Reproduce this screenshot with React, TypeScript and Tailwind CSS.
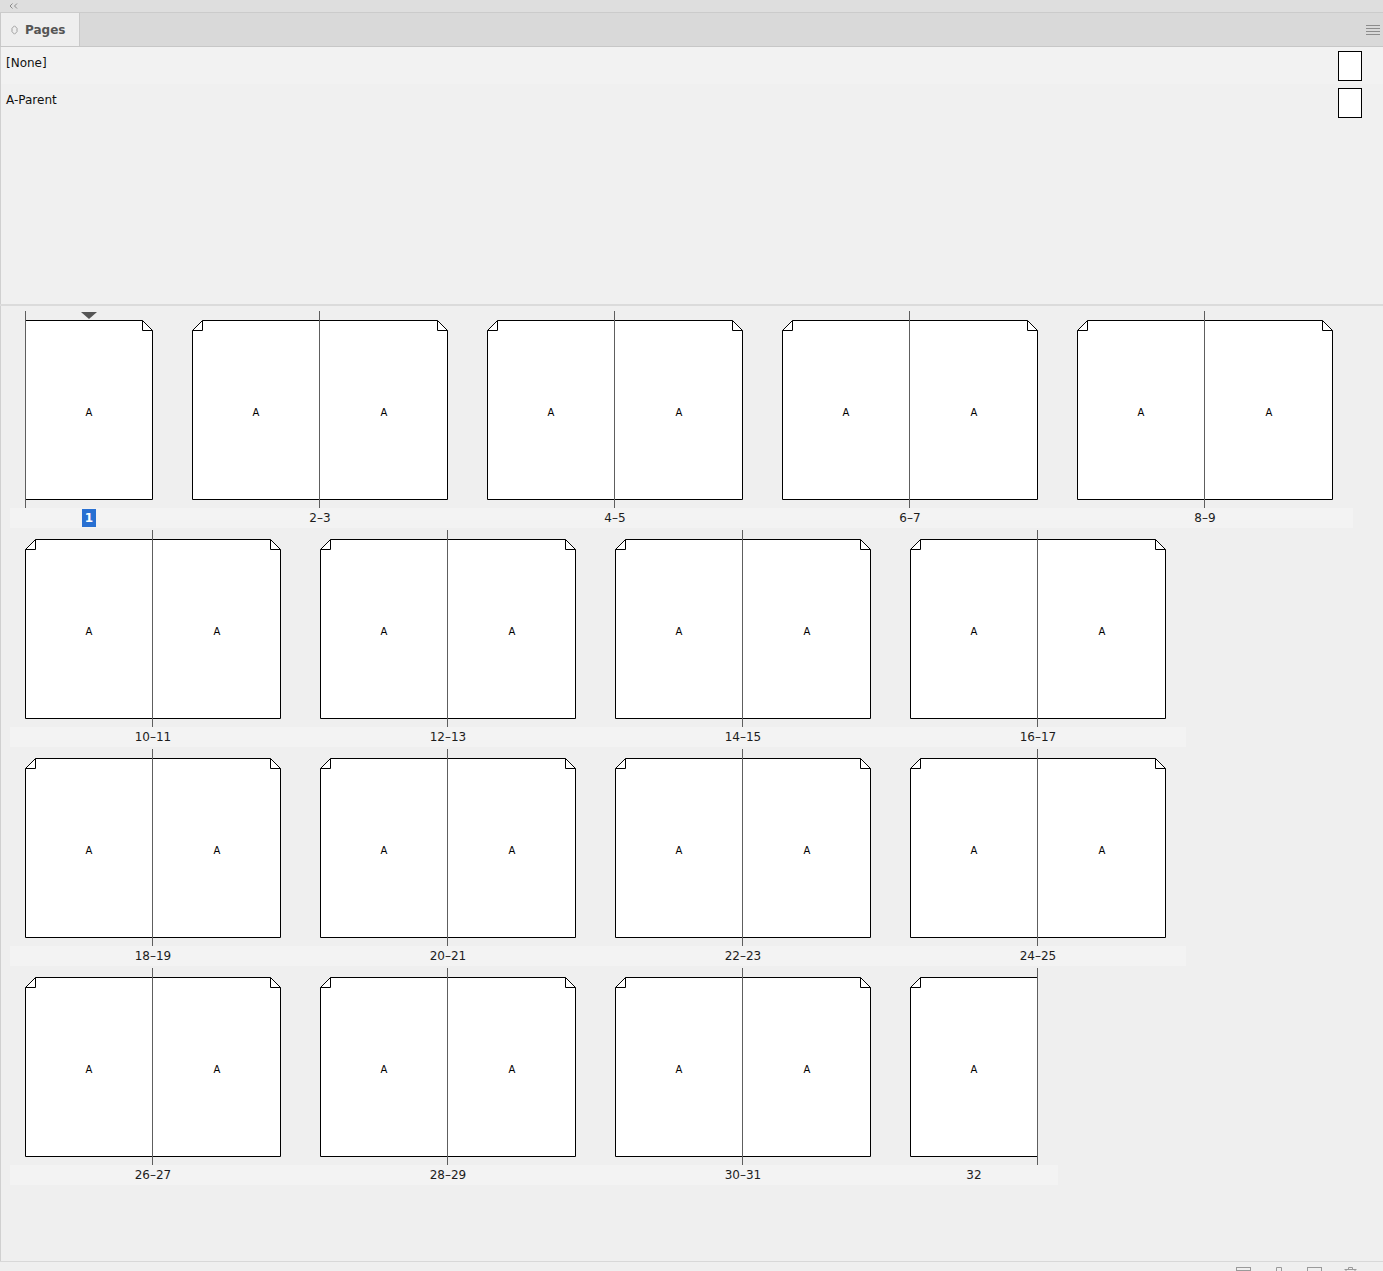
import React from "react";

type Kind = "spread" | "right" | "left";
type Item = { label: string; kind: Kind; selected?: boolean };

const sp = (label: string): Item => ({ label, kind: "spread" });

const ROWS: Item[][] = [
  [{ label: "1", kind: "right", selected: true }, sp("2–3"), sp("4–5"), sp("6–7"), sp("8–9")],
  [sp("10–11"), sp("12–13"), sp("14–15"), sp("16–17")],
  [sp("18–19"), sp("20–21"), sp("22–23"), sp("24–25")],
  [sp("26–27"), sp("28–29"), sp("30–31"), { label: "32", kind: "left" }],
];

function PageOutline({ kind, selected }: { kind: Kind; selected?: boolean }) {
  const w = kind === "spread" ? 256 : 128;
  let outline = "";
  const folds: string[] = [];
  let spineX = 127.5;
  if (kind === "spread") {
    outline = "M10.5 9.5 H245.5 L255.5 19.5 V188.5 H0.5 V19.5 Z";
    folds.push("M10.5 9.5 V19.5 H0.5", "M245.5 9.5 V19.5 H255.5");
  } else if (kind === "right") {
    outline = "M0.5 9.5 H117.5 L127.5 19.5 V188.5 H0.5 Z";
    folds.push("M117.5 9.5 V19.5 H127.5");
    spineX = 0.5;
  } else {
    outline = "M10.5 9.5 H127.5 V188.5 H0.5 V19.5 Z";
    folds.push("M10.5 9.5 V19.5 H0.5");
  }
  return (
    <svg width={w} height={197} viewBox={`0 0 ${w} 197`} className="absolute inset-0">
      <path d={outline} fill="#fff" stroke="#000" strokeWidth={1} />
      {folds.map((d) => (
        <path key={d} d={d} fill="none" stroke="#000" strokeWidth={1} />
      ))}
      <path d={`M${spineX} 0 V197`} stroke="#5e5e5e" strokeWidth={1} />
      {selected && <polygon points="56,1 72,1 64,8" fill="#555" />}
    </svg>
  );
}

function Spread({ item }: { item: Item }) {
  const halves = item.kind === "spread" ? 2 : 1;
  return (
    <div className={item.kind === "spread" ? "w-[256px] flex flex-col" : "w-[128px] flex flex-col"}>
      <div className="relative h-[197px]">
        <PageOutline kind={item.kind} selected={item.selected} />
        <div className="absolute left-0 right-0 top-[9px] h-[180px] flex">
          {Array.from({ length: halves }).map((_, i) => (
            <div key={i} className="flex-1 flex items-center justify-center pt-[4px] text-[10px] text-black">
              A
            </div>
          ))}
        </div>
      </div>
      <div className="h-[20px] flex items-center justify-center text-[12px] text-[#1c1c1c]">
        {item.selected ? (
          <span className="w-[14px] h-[18px] bg-[#2870d2] text-white font-bold flex items-center justify-center">
            {item.label}
          </span>
        ) : (
          item.label
        )}
      </div>
    </div>
  );
}

function ParentRow({ label, top }: { label: string; top?: boolean }) {
  return (
    <div className={top ? "h-[37px] flex items-center justify-between pl-[5px] pr-[21px] bg-[#f2f2f2]" : "h-[37px] flex items-center justify-between pl-[5px] pr-[21px]"}>
      <span className="text-[12px] text-[#111] pb-[6px]">{label}</span>
      <div className="w-[24px] h-[30px] bg-white border-[1.5px] border-black" />
    </div>
  );
}

export default function App() {
  return (
    <div className="w-full h-[1271px] overflow-hidden flex flex-col bg-[#f0f0f0] font-['DejaVu_Sans',sans-serif]">
      <div className="h-[13px] shrink-0 bg-[#dedede] border-b border-[#cbcbcb] flex items-center pl-[9px]">
        <svg width="9" height="6" viewBox="0 0 9 6">
          <path d="M3.5 0.5 L1 3 L3.5 5.5 M8 0.5 L5.5 3 L8 5.5" fill="none" stroke="#8a8a8a" strokeWidth="1" />
        </svg>
      </div>

      <div className="h-[34px] shrink-0 bg-[#d9d9d9] border-b border-[#c7c7c7] flex items-stretch justify-between">
        <div className="w-[80px] bg-[#eeeeee] border-r border-[#c9c9c9] border-l flex items-center gap-[7px] pl-[10px]">
          <svg width="7" height="10" viewBox="0 0 7 10">
            <path d="M3.5 0.8 L6 3.3 V6.7 L3.5 9.2 L1 6.7 V3.3 Z" fill="none" stroke="#a0a0a0" strokeWidth="1" />
          </svg>
          <span className="text-[12px] font-bold text-[#555]">Pages</span>
        </div>
        <div className="flex items-center pr-[3px]">
          <svg width="14" height="10" viewBox="0 0 14 10">
            {[0.5, 3.5, 6.5, 9.5].map((y) => (
              <path key={y} d={`M0 ${y} H14`} stroke="#8c8c8c" strokeWidth="1" />
            ))}
          </svg>
        </div>
      </div>

      <div className="h-[257px] shrink-0 border-l border-[#d0d0d0] bg-[#f0f0f0]">
        <ParentRow label="[None]" top />
        <ParentRow label="A-Parent" />
      </div>

      <div className="h-[2px] shrink-0 bg-[#dbdbdb]" />

      <div className="h-[955px] shrink-0 border-l border-[#d0d0d0] bg-[#efefef] pt-[5px] flex flex-col gap-[2px]">
        {ROWS.map((row, r) => (
          <div
            key={r}
            className="ml-[9px] w-fit pl-[15px] pr-[20px] flex gap-[39px] bg-[linear-gradient(to_bottom,transparent_197px,#f3f3f3_197px)]"
          >
            {row.map((item) => (
              <Spread key={item.label} item={item} />
            ))}
          </div>
        ))}
      </div>

      <div className="h-[30px] shrink-0 border-t border-[#d8d8d8] bg-[#efefef] flex items-start justify-end gap-[22px] pr-[26px] pt-[5px]">
        <svg width="15" height="12" viewBox="0 0 15 12">
          <rect x="0.5" y="0.5" width="14" height="11" fill="none" stroke="#9a9a9a" />
          <path d="M0.5 3.5 H14.5" stroke="#9a9a9a" />
        </svg>
        <svg width="12" height="12" viewBox="0 0 12 12">
          <path d="M3.5 0.5 H8.5 V11.5 H3.5 Z" fill="none" stroke="#9a9a9a" />
        </svg>
        <svg width="15" height="12" viewBox="0 0 15 12">
          <rect x="0.5" y="0.5" width="14" height="11" fill="none" stroke="#9a9a9a" />
        </svg>
        <svg width="13" height="12" viewBox="0 0 13 12">
          <path d="M0.5 2.5 H12.5 M4.5 2.5 V0.5 H8.5 V2.5 M2 2.5 V11.5 H11 V2.5" fill="none" stroke="#9a9a9a" />
        </svg>
      </div>
    </div>
  );
}
